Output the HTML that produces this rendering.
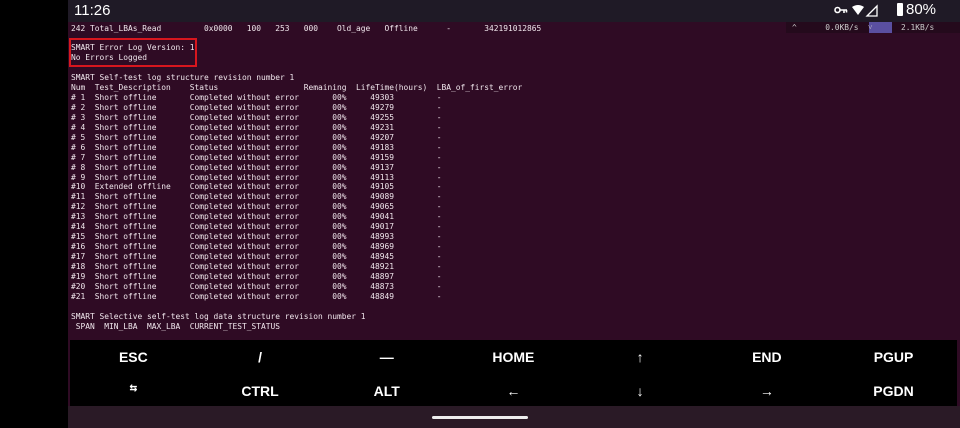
<!DOCTYPE html>
<html><head><meta charset="utf-8"><style>
*{margin:0;padding:0;box-sizing:border-box}
body{width:960px;height:428px;background:#000;position:relative;overflow:hidden;font-family:"Liberation Sans",sans-serif}
#sb{position:absolute;left:68px;top:0;width:892px;height:22px;background:#1f1a26;color:#fff}
#term{position:absolute;left:68px;top:22px;width:892px;height:384px;background:#2f0b24}
pre{position:absolute;left:3px;font-family:"DejaVu Sans Mono",monospace;font-size:7.9px;line-height:9.95px;color:#f0e6ec;white-space:pre}
#kb{position:absolute;left:70px;top:340px;width:887px;height:66px;background:#000;color:#fff;font-weight:bold;font-size:14px}
.k{position:absolute;width:126.7px;text-align:center}
#nav{position:absolute;left:68px;top:406px;width:892px;height:22px;background:#2a1a26}
</style></head><body>
<div id="sb">
<div style="position:absolute;left:6px;top:2px;font-size:15px">11:26</div>
<svg style="position:absolute;left:766px;top:5px" width="14" height="10" viewBox="0 0 14 10"><circle cx="3.5" cy="5" r="2.5" fill="none" stroke="#fff" stroke-width="1.6"/><path d="M6 5 H13 M10 5 V8 M12.5 5 V7.5" stroke="#fff" stroke-width="1.6"/></svg>
<svg style="position:absolute;left:783px;top:4px" width="34" height="13" viewBox="0 0 34 13"><path d="M1 3 Q7 -1 13 3 L7 11 Z" fill="#fff"/><path d="M16 12 L26 2 L26 12 Z" fill="none" stroke="#fff" stroke-width="1.3"/></svg>
<div style="position:absolute;left:829px;top:3px;width:6px;height:13px;background:#fff;border-radius:1px"></div>
<div style="position:absolute;left:838px;top:1px;font-size:15px">80%</div>
</div>
<div id="term">
<div style="position:absolute;left:718px;top:0;width:174px;height:11px;background:#240a1c"></div>
<div style="position:absolute;left:801px;top:0;width:23px;height:11px;background:#5a4fa0"></div>
<pre style="top:1px;left:724px;color:#ccc">^      0.0KB/s  ˅      2.1KB/s</pre>
<pre style="top:2px">242 Total_LBAs_Read         0x0000   100   253   000    Old_age   Offline      -       342191012865</pre>
<div style="position:absolute;left:1px;top:16px;width:128px;height:29px;border:2px solid #d8161e"></div>
<pre style="top:21px">SMART Error Log Version: 1
No Errors Logged</pre>
<pre style="top:51px">SMART Self-test log structure revision number 1
Num  Test_Description    Status                  Remaining  LifeTime(hours)  LBA_of_first_error
# 1  Short offline       Completed without error       00%     49303         -
# 2  Short offline       Completed without error       00%     49279         -
# 3  Short offline       Completed without error       00%     49255         -
# 4  Short offline       Completed without error       00%     49231         -
# 5  Short offline       Completed without error       00%     49207         -
# 6  Short offline       Completed without error       00%     49183         -
# 7  Short offline       Completed without error       00%     49159         -
# 8  Short offline       Completed without error       00%     49137         -
# 9  Short offline       Completed without error       00%     49113         -
#10  Extended offline    Completed without error       00%     49105         -
#11  Short offline       Completed without error       00%     49089         -
#12  Short offline       Completed without error       00%     49065         -
#13  Short offline       Completed without error       00%     49041         -
#14  Short offline       Completed without error       00%     49017         -
#15  Short offline       Completed without error       00%     48993         -
#16  Short offline       Completed without error       00%     48969         -
#17  Short offline       Completed without error       00%     48945         -
#18  Short offline       Completed without error       00%     48921         -
#19  Short offline       Completed without error       00%     48897         -
#20  Short offline       Completed without error       00%     48873         -
#21  Short offline       Completed without error       00%     48849         -

SMART Selective self-test log data structure revision number 1
 SPAN  MIN_LBA  MAX_LBA  CURRENT_TEST_STATUS</pre>
</div>
<div id="kb">
<div class="k" style="left:0;top:9px">ESC</div>
<div class="k" style="left:126.7px;top:9px">/</div>
<div class="k" style="left:253.4px;top:9px">—</div>
<div class="k" style="left:380px;top:9px">HOME</div>
<div class="k" style="left:506.8px;top:9px">↑</div>
<div class="k" style="left:633.5px;top:9px">END</div>
<div class="k" style="left:760.2px;top:9px">PGUP</div>
<div class="k" style="left:0;top:43px;font-size:9px">⇆</div>
<div class="k" style="left:126.7px;top:43px">CTRL</div>
<div class="k" style="left:253.4px;top:43px">ALT</div>
<div class="k" style="left:380px;top:43px">←</div>
<div class="k" style="left:506.8px;top:43px">↓</div>
<div class="k" style="left:633.5px;top:43px">→</div>
<div class="k" style="left:760.2px;top:43px">PGDN</div>
</div>
<div id="nav"><div style="position:absolute;left:364px;top:10px;width:96px;height:3px;border-radius:2px;background:#eee"></div></div>
</body></html>
